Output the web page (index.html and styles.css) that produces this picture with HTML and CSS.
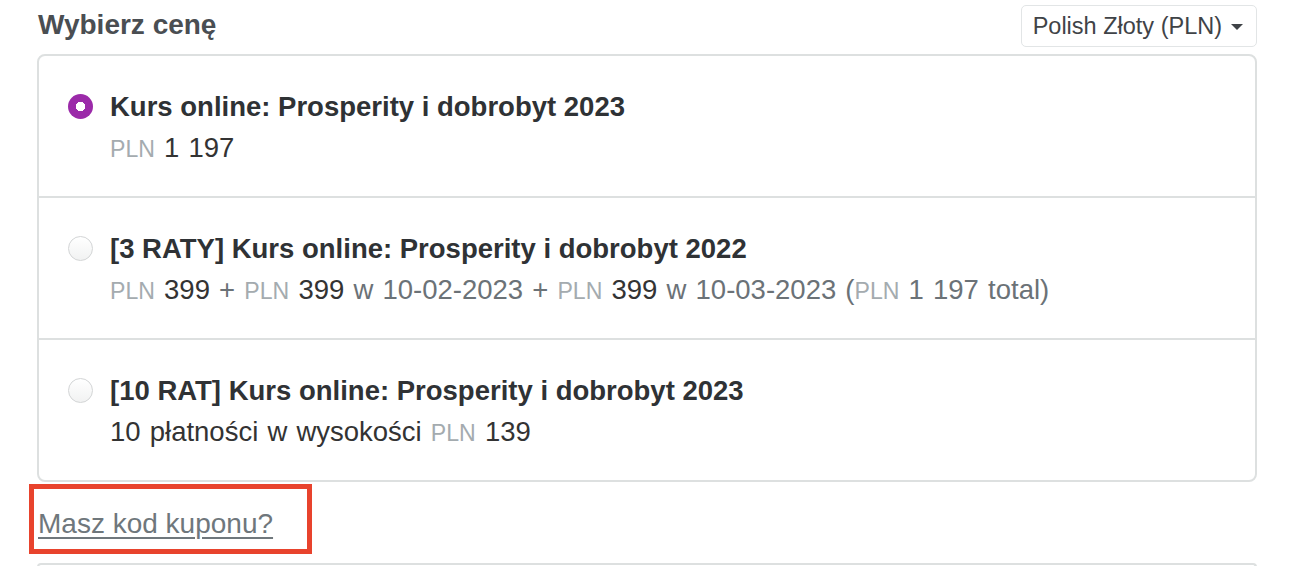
FILE: index.html
```html
<!DOCTYPE html>
<html lang="pl">
<head>
    <meta charset="UTF-8">
    <meta name="viewport" content="width=device-width, initial-scale=1.0">
    <title>Wybierz cenę</title>
    <link rel="stylesheet" href="styles.css">
</head>
<body>

<div class="checkout">
    <div class="price-header">
        <h2>Wybierz cenę</h2>
        <button class="currency">Polish Złoty (PLN) <span class="caret"></span></button>
    </div>

    <div class="price-list">
        <label class="price-option">
            <span class="radio checked"></span>
            <span class="option-body">
                <span class="option-title">Kurs online: Prosperity i dobrobyt 2023</span>
                <span class="option-price"><span class="cur">PLN</span> <span class="amt">1 197</span></span>
            </span>
        </label>
        <label class="price-option">
            <span class="radio"></span>
            <span class="option-body">
                <span class="option-title">[3 RATY] Kurs online: Prosperity i dobrobyt 2022</span>
                <span class="option-price"><span class="cur">PLN</span> <span class="amt">399</span> + <span class="cur">PLN</span> <span class="amt">399</span> w 10-02-2023 + <span class="cur">PLN</span> <span class="amt">399</span> w 10-03-2023 (<span class="cur">PLN</span> 1 197 total)</span>
            </span>
        </label>
        <label class="price-option">
            <span class="radio"></span>
            <span class="option-body">
                <span class="option-title">[10 RAT] Kurs online: Prosperity i dobrobyt 2023</span>
                <span class="option-price"><span class="amt">10 płatności w wysokości</span> <span class="cur">PLN</span> <span class="amt">139</span></span>
            </span>
        </label>
    </div>

    <div class="coupon-mark">
        <a href="#" class="coupon-link">Masz kod kuponu?</a>
    </div>

    <div class="next-box"></div>
</div>

</body>
</html>
```

FILE: styles.css
```css
body {
    margin: 0;
    font-family: "Liberation Sans", Arial, Helvetica, sans-serif;
    background: #ffffff;
    color: #333333;
}
.checkout {
    padding: 5px 35px 0 37px;
}
.price-header {
    display: flex;
    justify-content: space-between;
    align-items: center;
    height: 42px;
    margin-bottom: 7px;
}
.price-header h2 {
    margin: 0 0 3px 1px;
    font-size: 28px;
    line-height: 42px;
    font-weight: bold;
    color: #4a4e52;
}
.currency {
    display: flex;
    align-items: center;
    gap: 9px;
    height: 42px;
    padding: 0 13px 0 11px;
    background: #ffffff;
    border: 1px solid #e2e5e6;
    border-radius: 5px;
    font-family: inherit;
    font-size: 23.5px;
    color: #3f4347;
}
.caret {
    width: 0;
    height: 0;
    border-left: 6px solid transparent;
    border-right: 6px solid transparent;
    border-top: 6px solid #3f4347;
    margin-top: 2px;
}
.price-list {
    border: 2px solid #dde0e0;
    border-radius: 8px;
}
.price-option {
    display: flex;
    align-items: flex-start;
    padding: 30px 20px 28px 29px;
    border-bottom: 2px solid #dde0e0;
    cursor: pointer;
}
.price-option:last-child {
    border-bottom: none;
}
.radio {
    flex: none;
    box-sizing: border-box;
    width: 25px;
    height: 25px;
    margin: 8px 17px 0 0;
    border-radius: 50%;
    border: 1px solid #d3d5d6;
    background: linear-gradient(#ffffff, #f1f2f2);
}
.radio.checked {
    border: none;
    background: radial-gradient(circle, #ffffff 0 4.5px, #9b2aa9 5px);
}
.option-body {
    display: flex;
    flex-direction: column;
    font-size: 27.5px;
    line-height: 41px;
}
.option-title {
    font-weight: bold;
    color: #2f3235;
}
.option-price {
    height: 41px;
    color: #6b7277;
    word-spacing: 1.5px;
}
.option-price .cur {
    font-size: 0.84em;
    line-height: 1;
    color: #a4abaf;
}
.option-price .amt {
    color: #333333;
}
.coupon-mark {
    display: inline-block;
    margin: 2px 0 0 -8px;
    padding: 14px 34px 5px 4px;
    border: 5px solid #e8432d;
}
.coupon-link {
    display: block;
    font-size: 28px;
    line-height: 41px;
    color: #6f777c;
    text-decoration: underline;
    text-underline-offset: 4px;
    text-decoration-thickness: 2px;
}
.next-box {
    height: 2px;
    margin-top: 9px;
    border: 2px solid #dde0e0;
    border-bottom: none;
    border-radius: 8px 8px 0 0;
}
```
